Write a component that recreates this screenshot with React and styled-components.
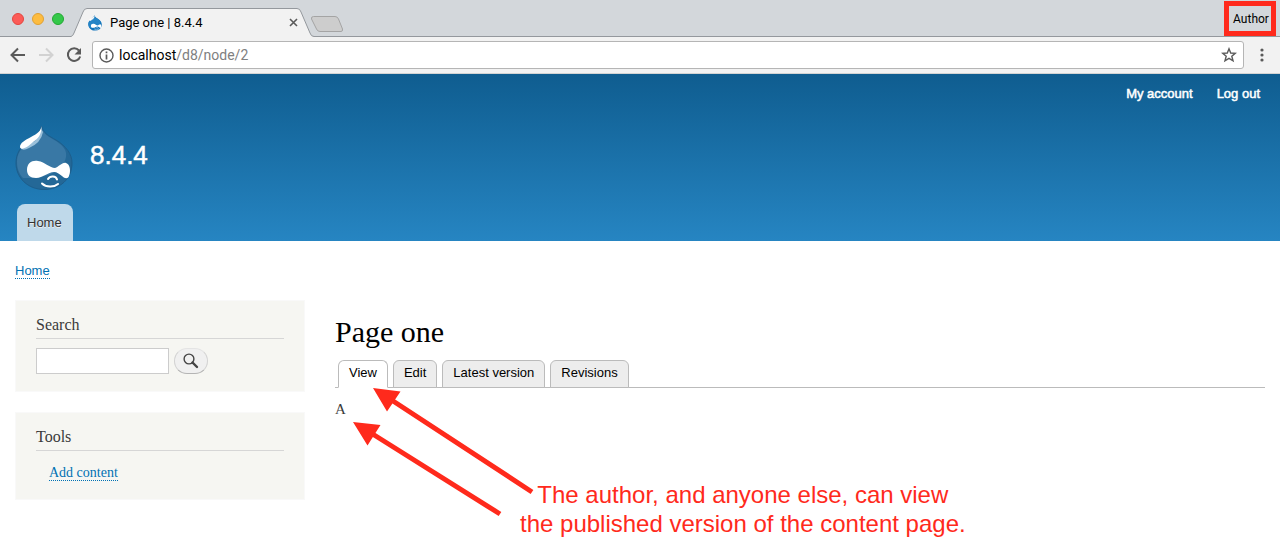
import React from "react";
import styled, { createGlobalStyle } from "styled-components";

const sans = '"Liberation Sans", Arial, sans-serif';
const ui = 'Roboto, "Liberation Sans", sans-serif';
const serif = '"Liberation Serif", Georgia, serif';

const GlobalStyle = createGlobalStyle`
  * { box-sizing: border-box; }
  body { margin: 0; background: #fff; color: #3b3b3b; font-family: ${serif}; }
  h1, h2, p, ul { margin: 0; padding: 0; font-weight: 400; }
  ul { list-style: none; }
  button { padding: 0; border: 0; background: none; }
  svg { display: block; }
`;

const Page = styled.div`
  position: relative;
  min-height: 100vh;
  overflow: hidden;
`;

const TabStrip = styled.div`
  display: flex;
  align-items: flex-end;
  height: 37px;
  padding-right: 4px;
  background: #d3d7db;
  box-shadow: inset 0 -1px #94989d;
`;

const WindowButtons = styled.div`
  display: flex;
  gap: 8px;
  align-self: center;
  padding-left: 12px;
`;

const WindowButton = styled.button`
  width: 12px;
  height: 12px;
  border: 1px solid ${(p) => p.$edge};
  border-radius: 50%;
  background: ${(p) => p.$fill};
`;

const BrowserTab = styled.div`
  position: relative;
  display: flex;
  align-items: center;
  width: 243px;
  height: 29px;
  margin-left: 7px;
  padding: 0 16px 0 17px;
  font: 13px/16px ${ui};
  color: #000;
`;

const TabShape = styled.svg`
  position: absolute;
  inset: 0;
`;

const TabTitle = styled.span`
  position: relative;
  flex: 1;
  margin-left: 8px;
`;

const Above = styled.span`
  position: relative;
`;

const IconButton = styled.button`
  position: relative;
  display: flex;
`;

const NewTab = styled.button`
  margin: 0 auto 4px -4px;
`;

const Profile = styled.button`
  width: 52px;
  height: 35px;
  align-self: flex-start;
  border: 5px solid #ff2a1c;
  margin-top: 1px;
  padding-left: 2px;
  font: 12px/16px ${ui};
  color: #000;
  white-space: nowrap;
`;

const Toolbar = styled.div`
  display: flex;
  align-items: center;
  height: 37px;
  padding: 0 10px;
  background: #f2f2f2;
  border-bottom: 1px solid #d3d3d3;
`;

const NavButtons = styled.div`
  display: flex;
  gap: 12px;
  margin-right: 10px;
`;

const AddressBar = styled.div`
  display: flex;
  flex: 1;
  align-items: center;
  height: 28px;
  margin-right: 10px;
  padding: 0 6px;
  gap: 5px;
  border: 1px solid #b5b5b5;
  border-radius: 3px;
  background: #fff;
`;

const Address = styled.a`
  flex: 1;
  font: 14px/20px ${ui};
  color: #808080;
  text-decoration: none;
`;

const Host = styled.span`
  color: #000;
`;

const SiteHeader = styled.header`
  padding: 10px 15px 0;
  background: linear-gradient(#0f5d90, #2685c2);
  font-family: ${sans};
`;

const AccountMenu = styled.nav`
  display: flex;
  justify-content: flex-end;
  gap: 24px;
  padding-right: 5px;
`;

const AccountLink = styled.a`
  font: 13px/20px ${sans};
  color: #fff;
  text-decoration: none;
  -webkit-text-stroke: 0.5px #fff;
`;

const Branding = styled.div`
  display: flex;
  gap: 17px;
  padding-top: 20px;
`;

const SiteName = styled.a`
  padding-top: 15px;
  font: 26px/32px ${sans};
  color: #fff;
  text-decoration: none;
  -webkit-text-stroke: 0.5px #fff;
`;

const MainMenu = styled.nav`
  display: flex;
  padding: 12px 2px 0;
`;

const MainLink = styled.a`
  padding: 0 11px 0 10px;
  border-radius: 8px 8px 0 0;
  background: #bfd9ea;
  font: 13px/37px ${sans};
  color: #333;
  text-decoration: none;
  text-shadow: 0 1px #eee;
`;

const DottedLink = styled.a`
  border-bottom: 1px dotted #0071b3;
  color: #0071b3;
  text-decoration: none;
`;

const Breadcrumb = styled.nav`
  padding: 22px 15px;
  font: 13px/15px ${sans};
`;

const Columns = styled.div`
  display: flex;
`;

const Sidebar = styled.aside`
  display: flex;
  flex-direction: column;
  gap: 20px;
  width: 25%;
  padding: 0 15px;
`;

const Block = styled.section`
  padding: 14px 20px 17px;
  border: 1px solid #f9f9f9;
  background: #f6f6f2;
`;

const BlockTitle = styled.h2`
  margin-bottom: 9px;
  padding-bottom: 3px;
  border-bottom: 1px solid #d6d6d6;
  font: 16px/20px ${serif};
`;

const SearchForm = styled.form`
  display: flex;
  gap: 5px;
`;

const SearchInput = styled.input`
  width: 133px;
  height: 26px;
  border: 1px solid #ccc;
  background: #fff;
`;

const SearchButton = styled.button`
  display: flex;
  align-items: center;
  justify-content: center;
  width: 34px;
  height: 26px;
  border: 1px solid #e4e4e4;
  border-color: #e4e4e4 #d2d2d2 #b4b4b4;
  border-radius: 13px;
  background: #f0f0f0;
`;

const ToolList = styled.ul`
  padding: 4px 0 0 13px;
  font: 14px/18px ${serif};
`;

const Content = styled.main`
  flex: 1;
  padding: 15px 15px 0;
`;

const PageTitle = styled.h1`
  font: 30px/34px ${serif};
  color: #000;
`;

const Tabs = styled.nav`
  display: flex;
  gap: 5px;
  margin-top: 11px;
  padding-left: 3px;
  border-bottom: 1px solid #bbb;
`;

const LocalTab = styled.a`
  margin-bottom: -1px;
  padding: 0 10px 2px;
  border: 1px solid #bbb;
  border-bottom-color: ${(p) => (p.$active ? "#fff" : "#bbb")};
  border-radius: 6px 6px 0 0;
  background: ${(p) => (p.$active ? "#fff" : "#ededed")};
  font: 13px/24px ${sans};
  color: #000;
  text-decoration: none;
`;

const Body = styled.p`
  margin-top: 11px;
  font: 15px/20px ${serif};
`;

const Arrows = styled.svg`
  position: absolute;
  left: 350px;
  top: 384px;
  pointer-events: none;
`;

const Note = styled.p`
  position: absolute;
  left: 520px;
  top: 480px;
  font: 24px/29px ${sans};
  color: #ff2a1c;
  text-align: center;
  white-space: nowrap;
`;

const NoteLine = styled.span`
  display: block;
`;

function Drop({ width, height, flat }) {
  return (
    <svg width={width} height={height} viewBox="0 0 58 66" aria-hidden="true">
      <path d="M26.500 1C28 8 34 11 41 15C51 21 57 29 57 38C57 54 45 64.500 29 64.500C13 64.500 1 53 1 38C1 29 5 22 13 16C20 11 25 8 26.500 1Z" fill={flat ? "#0f73ba" : "#246897"} stroke={flat ? "none" : "#1d5e8c"} />
      <path d="M26.500 2C28 9 34 12 41 16C49 21 52 26 51 32C48 46 33 54 8 53C4 49 2 43 2 37C2 29 6 23 13 17C21 11 25 8 26.500 2Z" fill={flat ? "#2484c6" : "#3978a5"} />
      <path d="M5 22Q7 27 14 23Q26 18 28 7L26 4L20 16Z" fill="#9ac0da" />
      <path d="M26.500 1C26 6 22 9 16 12C10 15 5 18 5 22C6 26 13 22 18 17C23 14 27 9 26.500 1Z" fill="#fff" />
      <path d="M12 45C12 38 17 35 23 36C30 37 35 43 40 43C44 42 47 37 51 38C55 39 56 46 54 51C53 54 50 54 47 51C44 49 42 47 39 47C33 47 28 53 21 53C15 53 12 50 12 45Z" fill="#fff" />
      <path d="M33 54C35 50.500 41 50.500 42 54.500M27 58.500C31 62.500 39 62.500 43 59" fill="none" stroke="#fff" strokeWidth="2" strokeLinecap="round" />
    </svg>
  );
}

export default function App() {
  return (
    <Page>
      <GlobalStyle />
      <TabStrip>
        <WindowButtons>
          <WindowButton $fill="#fc5b57" $edge="#e3463f" aria-label="Close window" />
          <WindowButton $fill="#fdbc40" $edge="#e0a134" aria-label="Minimize window" />
          <WindowButton $fill="#34c84a" $edge="#23a833" aria-label="Zoom window" />
        </WindowButtons>
        <BrowserTab>
          <TabShape width="243" height="29" aria-hidden="true">
            <path d="M0 29V28.500Q2 28 3 25L12 4Q13 .5 16 .5H226Q229 .5 230 4L239 25Q240 28.500 243 28.500V29Z" fill="#f2f2f2" />
            <path d="M0 28.500Q2 28 3 25L12 4Q13 .5 16 .5H226Q229 .5 230 4L239 25Q240 28.500 243 28.500" fill="none" stroke="#94989d" />
          </TabShape>
          <Above><Drop width={14} height={16} flat /></Above>
          <TabTitle>Page one | 8.4.4</TabTitle>
          <IconButton aria-label="Close tab">
            <svg width="9" height="9" stroke="#5a5a5a" strokeWidth="1.600"><path d="M1 1L8 8M8 1L1 8" /></svg>
          </IconButton>
        </BrowserTab>
        <NewTab aria-label="New tab">
          <svg width="34" height="17">
            <path d="M3.500 .5H25Q27.500 .5 28.500 3L32.500 13Q33 15.500 31 15.500H10Q7.500 15.500 6.500 13L1.500 3Q1 .5 3.500 .5Z" fill="#cdcdcd" stroke="#a4a4a4" />
          </svg>
        </NewTab>
        <Profile>Author</Profile>
      </TabStrip>

      <Toolbar>
        <NavButtons>
          <IconButton aria-label="Back">
            <svg width="16" height="16" fill="none" stroke="#5a5a5a" strokeWidth="2"><path d="M15 8H2M8 1.500L1.500 8L8 14.500" /></svg>
          </IconButton>
          <IconButton aria-label="Forward">
            <svg width="16" height="16" fill="none" stroke="#d2d2d2" strokeWidth="2"><path d="M1 8H14M8 1.500L14.500 8L8 14.500" /></svg>
          </IconButton>
          <IconButton aria-label="Reload">
            <svg width="16" height="16"><path d="M13 3.500A6.300 6.300 0 1 0 14.200 9.500" fill="none" stroke="#5a5a5a" strokeWidth="2" /><path d="M15 1V7.500H8.500Z" fill="#5a5a5a" /></svg>
          </IconButton>
        </NavButtons>
        <AddressBar>
          <svg width="15" height="15" fill="none" stroke="#5a5a5a"><circle cx="7.500" cy="7.500" r="6.500" strokeWidth="1.400" /><path d="M7.500 6.500V11.500M7.500 3.500V5.200" strokeWidth="1.700" /></svg>
          <Address href="#"><Host>localhost</Host>/d8/node/2</Address>
          <IconButton aria-label="Bookmark this page">
            <svg width="16" height="16" fill="none" stroke="#5a5a5a" strokeWidth="1.400"><path d="M8 1.800L9.700 6L14.300 6.300L10.800 9.300L12 13.800L8 11.300L4 13.800L5.200 9.300L1.700 6.300L6.300 6Z" /></svg>
          </IconButton>
        </AddressBar>
        <IconButton aria-label="Browser menu">
          <svg width="16" height="16" fill="#5a5a5a"><circle cx="8" cy="3" r="1.600" /><circle cx="8" cy="8" r="1.600" /><circle cx="8" cy="13" r="1.600" /></svg>
        </IconButton>
      </Toolbar>

      <SiteHeader>
        <AccountMenu>
          <AccountLink href="#">My account</AccountLink>
          <AccountLink href="#">Log out</AccountLink>
        </AccountMenu>
        <Branding>
          <Drop width={58} height={68} />
          <SiteName href="#">8.4.4</SiteName>
        </Branding>
        <MainMenu><MainLink href="#">Home</MainLink></MainMenu>
      </SiteHeader>

      <Breadcrumb><DottedLink href="#">Home</DottedLink></Breadcrumb>

      <Columns>
        <Sidebar>
          <Block>
            <BlockTitle>Search</BlockTitle>
            <SearchForm>
              <SearchInput type="search" aria-label="Search" />
              <SearchButton type="button" aria-label="Search">
                <svg width="16" height="16" fill="none" stroke="#444"><circle cx="6" cy="6" r="4.900" strokeWidth="1.400" /><path d="M9.500 9.500L14 14" strokeWidth="2.400" strokeLinecap="round" /></svg>
              </SearchButton>
            </SearchForm>
          </Block>
          <Block>
            <BlockTitle>Tools</BlockTitle>
            <ToolList><li><DottedLink href="#">Add content</DottedLink></li></ToolList>
          </Block>
        </Sidebar>
        <Content>
          <PageTitle>Page one</PageTitle>
          <Tabs>
            <LocalTab href="#" $active>View</LocalTab>
            <LocalTab href="#">Edit</LocalTab>
            <LocalTab href="#">Latest version</LocalTab>
            <LocalTab href="#">Revisions</LocalTab>
          </Tabs>
          <Body>A</Body>
        </Content>
      </Columns>

      <Arrows width="190" height="140" viewBox="350 384 190 140" fill="#ff2a1c" stroke="#ff2a1c" aria-hidden="true">
        <path d="M390 399L532 492M371 433L500 514" strokeWidth="5" />
        <path d="M373 388L400.500 391.500L387 411.500ZM353 422L380.500 425L367.500 445.500Z" stroke="none" />
      </Arrows>
      <Note>
        <NoteLine>The author, and anyone else, can view</NoteLine>
        <NoteLine>the published version of the content page.</NoteLine>
      </Note>
    </Page>
  );
}
